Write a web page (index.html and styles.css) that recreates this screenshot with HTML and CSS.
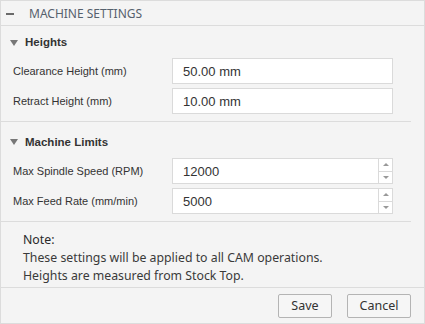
FILE: index.html
```html
<!DOCTYPE html>
<html>
<head>
<meta charset="utf-8">
<link rel="stylesheet" href="styles.css">
</head>
<body>
<div class="panel">
  <div class="header">
    <span class="collapse"></span>
    <span class="header-title">MACHINE SETTINGS</span>
  </div>
  <div class="content">
    <div class="section first">
      <div class="section-title"><span class="tri"></span>Heights</div>
      <div class="rows">
        <div class="row">
          <label class="label">Clearance Height (mm)</label>
          <div class="field"><span class="value">50.00 mm</span></div>
        </div>
        <div class="row">
          <label class="label">Retract Height (mm)</label>
          <div class="field"><span class="value">10.00 mm</span></div>
        </div>
      </div>
    </div>
    <div class="section">
      <div class="section-title"><span class="tri"></span>Machine Limits</div>
      <div class="rows">
        <div class="row">
          <label class="label">Max Spindle Speed (RPM)</label>
          <div class="field spin"><span class="value">12000</span>
            <div class="spinner"><span class="up"></span><span class="down"></span></div>
          </div>
        </div>
        <div class="row">
          <label class="label">Max Feed Rate (mm/min)</label>
          <div class="field spin"><span class="value">5000</span>
            <div class="spinner"><span class="up"></span><span class="down"></span></div>
          </div>
        </div>
      </div>
    </div>
  </div>
  <div class="note">
    <div class="note-head">Note:</div>
    <div>These settings will be applied to all CAM operations.</div>
    <div>Heights are measured from Stock Top.</div>
  </div>
  <div class="footer">
    <button class="btn save">Save</button>
    <button class="btn cancel">Cancel</button>
  </div>
</div>
</body>
</html>
```
FILE: styles.css
```css
* { box-sizing: border-box; }
html, body { margin: 0; padding: 0; background: #f4f4f4; }
.panel {
  width: 425px;
  height: 324px;
  background: #f4f4f4;
  border: 1px solid #dcdcdc;
  display: flex;
  flex-direction: column;
}
.header {
  height: 25px;
  border-bottom: 1px solid #dcdcdc;
  display: flex;
  align-items: center;
  padding-left: 5px;
}
.collapse {
  width: 8px;
  height: 2px;
  background: #6a6a6a;
  margin-right: 15px;
  margin-top: 1px;
}
.header-title {
  font-family: "Noto Sans", sans-serif;
  font-size: 12px;
  color: #56616d;
}
.content {
  padding-right: 13px;
}
.section {
  border-bottom: 1px solid #dcdcdc;
  padding-bottom: 7px;
}
.section-title {
  height: 36px;
  display: flex;
  align-items: center;
  padding-left: 9px;
  font-family: "Liberation Sans", Arial, sans-serif;
  font-weight: bold;
  font-size: 11.5px;
  color: #333;
  padding-top: 3px;
}
.section.first .section-title {
  height: 32px;
  padding-top: 0;
}
.tri {
  width: 0;
  height: 0;
  border-left: 4px solid transparent;
  border-right: 4px solid transparent;
  border-top: 6px solid #777;
  margin-right: 7px;
  margin-top: 1px;
}
.rows {
  display: flex;
  flex-direction: column;
  gap: 4px;
}
.row {
  display: flex;
  align-items: center;
  height: 26px;
}
.label {
  width: 171px;
  padding-left: 12px;
  font-family: "Liberation Sans", Arial, sans-serif;
  font-size: 11px;
  color: #333;
}
.field {
  width: 221px;
  height: 26px;
  background: #fff;
  border: 1px solid #dadada;
  display: flex;
  align-items: center;
  padding-left: 10px;
  font-family: "Liberation Sans", Arial, sans-serif;
  font-size: 13px;
  color: #333;
}
.value { flex: 1; }
.spinner {
  width: 14px;
  height: 100%;
  border-left: 1px solid #dadada;
  display: flex;
  flex-direction: column;
}
.spinner span {
  flex: 1;
  display: flex;
  align-items: center;
  justify-content: center;
}
.spinner .up { border-bottom: 1px solid #dadada; }
.spinner .up::before {
  content: "";
  border-left: 3px solid transparent;
  border-right: 3px solid transparent;
  border-bottom: 3px solid #999;
}
.spinner .down::before {
  content: "";
  border-left: 3px solid transparent;
  border-right: 3px solid transparent;
  border-top: 3px solid #999;
}
.note {
  flex: 1;
  padding: 9px 0 0 22px;
  font-family: "Noto Sans", sans-serif;
  font-size: 12.3px;
  line-height: 18px;
  color: #3a3a3a;
}
.note-head { color: #2a2a2a; }
.footer {
  height: 36px;
  border-top: 1px solid #dcdcdc;
  display: flex;
  justify-content: flex-end;
  align-items: center;
  gap: 15px;
  padding: 0 13px 0 0;
}
.btn {
  height: 24px;
  border: 1px solid #b4b4b4;
  border-radius: 2px;
  background: #f6f6f6;
  font-family: "Noto Sans", sans-serif;
  font-size: 12.5px;
  color: #333;
  padding: 0;
}
.save { width: 54px; }
.cancel { width: 64px; }
```
